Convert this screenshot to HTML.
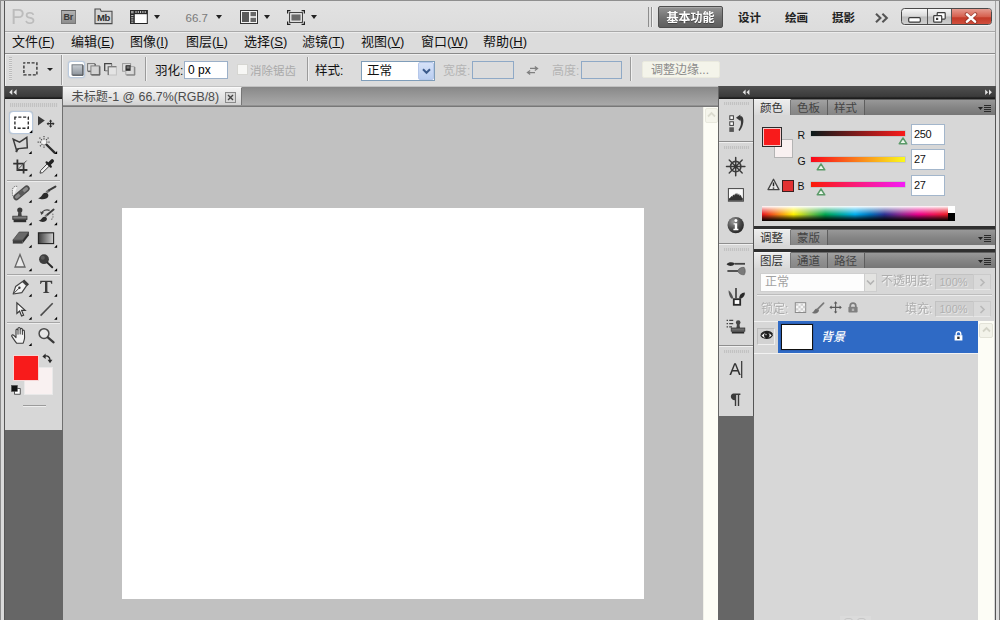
<!DOCTYPE html>
<html lang="zh-CN">
<head>
<meta charset="utf-8">
<title>Adobe Photoshop CS5</title>
<style>
html,body{margin:0;padding:0}
body{width:1000px;height:620px;overflow:hidden;position:relative;background:#dcdcdc;font-family:"Liberation Sans",sans-serif;font-size:12px;color:#000;line-height:1}
div,span,i,b{box-sizing:border-box}
.a{position:absolute}
svg{display:inline-block;overflow:visible}
svg.ic{position:absolute}
u{text-decoration:underline;text-underline-offset:1px}
.cj{font-family:"Liberation Sans","Noto Sans CJK SC",sans-serif;white-space:nowrap}
/* top application bar */
#appbar{left:0;top:0;width:1000px;height:32px;background:linear-gradient(#e2e2e2,#dcdcdc);border-top:1px solid #8f8f8f}
#appline{left:4px;top:31px;width:991px;height:2px;border-top:1px solid #a9a9a9;border-bottom:1px solid #ececec}
#menubar{left:0;top:33px;width:1000px;height:20px;background:#dcdcdc}
.mi{position:absolute;top:35px;height:14px;font-size:13px;line-height:14px;white-space:nowrap;color:#111}
#optbar{left:4px;top:53px;width:992px;height:33.5px;background:#dcdcdc;border:1px solid #8a8a8a;border-bottom-color:#7d7d7d;border-right-color:#a5a5a5;box-shadow:inset 1px 1px 0 #efefef}
.ol{position:absolute;top:64px;height:14px;font-size:12px;line-height:14px;white-space:nowrap}
.sep{position:absolute;top:57px;width:2px;height:24px;border-left:1px solid #9b9b9b;border-right:1px solid #f0f0f0}
.inp{position:absolute;background:#fff;border:1px solid #9cb0c8;font-size:12px}
.tri{position:absolute;width:0;height:0;border-left:3.5px solid transparent;border-right:3.5px solid transparent;border-top:4px solid #222}

#work{left:0;top:86px;width:1000px;height:534px;background:#666}
#lframe{left:0;top:0;width:4px;height:620px}
.hdr{background:linear-gradient(#505050,#3b3b3b 80%,#1e1e1e 92%)}
.grip{background:repeating-linear-gradient(90deg,#c2c2c2 0,#c2c2c2 1px,#d4d4d4 1px,#d4d4d4 2px)}
#tools{left:5px;top:86px;width:57.5px;height:344px;background:#d7d7d7;border-right:1px solid #6f6f6f}
.hsep{left:2px;width:53px;height:2px;border-top:1px solid #a6a6a6;border-bottom:1px solid #ededed}
#doc{left:63px;top:86px;width:655px;height:534px;background:#c1c1c1;overflow:hidden}
#tabstrip{left:0;top:.5px;width:655px;height:20px;background:linear-gradient(#878787,#8c8c8c 10%,#aaa 92%,#787878 93%)}
#doctab{left:0;top:1px;width:178.5px;height:18px;background:linear-gradient(#f2f2f2,#e2e2e2 60%,#d2d2d2);border-right:1px solid #777;border-top:1px solid #fafafa}
#paper{left:58.75px;top:121.75px;width:521.75px;height:391.5px;background:#fff}
#vscroll{left:640px;top:21px;width:15px;height:513px;background:#fdfdf6;border-left:1px solid #f0f0e8}
#dock{left:719px;top:86px;width:35px;height:330px;background:#d7d7d7;border-right:1px solid #555}
.dsep{left:0;width:34px;height:2px;border-top:1px solid #8e8e8e;border-bottom:1px solid #f0f0f0}
#panels{left:754px;top:86px;width:242px;height:534px;background:#666}
.tabbar{left:0;width:241px;height:16px;background:linear-gradient(#989898,#858585 50%,#767676);border-top:1px solid #5f5f5f}
.tab{height:16px;padding:2px 0 0 6px;border-right:1px solid #5e5e5e;background:linear-gradient(#a2a2a2,#909090 50%,#858585);border-top:1px solid #6a6a6a;white-space:nowrap}
.tab.on{background:linear-gradient(#ececec,#d8d8d8);border-top-color:#f4f4f4;border-right-color:#777;height:17px}
.pbody{left:0;width:241px;background:#d7d7d7}
.pline{left:0;width:241px;height:3px;background:#2f2f2f}

.cl{font-size:10.5px;line-height:14px;color:#111}
.sl{left:57px;width:94px;height:5px;box-shadow:0 0 0 .5px rgba(80,80,80,.25)}
.ci{left:156.5px;width:34px;height:21px;background:#fff;border:1px solid #a3b6cb;font-size:11px;letter-spacing:-.4px;line-height:18px;padding-left:2.5px;color:#111}
#spec{left:8px;top:119.5px;width:185.5px;height:15px;background:linear-gradient(rgba(255,255,255,1),rgba(255,255,255,.55) 22%,rgba(255,255,255,0) 55%,rgba(0,0,0,0) 56%,rgba(0,0,0,.6) 80%,rgba(0,0,0,1)),linear-gradient(90deg,#e8141c,#f47a1a 8%,#fff200 17%,#8cc63f 25%,#00a651 34%,#00a99d 42%,#00aeef 50%,#0072bc 58%,#2e3192 66%,#92278f 75%,#ec008c 84%,#ed145b 92%,#ed1c24)}
.di{left:181px;width:38px;height:16px;background:#d0d0d0;border:1px solid #c2c2c2;border-bottom-color:#e6e6e6;border-right:0;font-size:11px;line-height:14px;padding-left:3.5px;color:#b0b0b0;text-shadow:1px 1px 0 #e6e6e6}
.db{left:219px;width:18px;height:16px;background:#d9d9d9;border:1px solid #cacaca;border-bottom-color:#e6e6e6;padding:2.5px 0 0 5px}
.db svg{display:block}
</style>
</head>
<body>
<!-- ===== application bar ===== -->
<div class="a" id="appbar"></div>
<div class="a" id="appline"></div>
<div class="a" style="left:11px;top:6px;font-size:22px;line-height:22px;color:#bcbcbc;transform:scaleX(.94);transform-origin:0 0">Ps</div>

<!-- application bar icons -->
<div class="a" style="left:60.5px;top:10px;width:15.5px;height:14px;background:linear-gradient(#b2b2b2,#8c8c8c);border:1px solid #777;border-top-color:#5e5e5e;font-size:9px;font-weight:bold;line-height:12px;text-align:center;color:#3a3a3a;letter-spacing:-.3px">Br</div>
<svg class="ic" style="left:94px;top:8px" width="19" height="17" viewBox="0 0 19 17"><path d="M1 15.6V1h5.2l1 2.2H18v12.4Z" fill="#d4d4d4" stroke="#4a4a4a" stroke-width="1.1"/></svg>
<div class="a" style="left:95.5px;top:12px;width:16px;font-size:9.5px;font-weight:bold;line-height:11px;text-align:center;color:#2e2e2e;letter-spacing:-.4px">Mb</div>
<svg class="ic" style="left:130px;top:10px" width="18" height="14" viewBox="0 0 18 14"><rect x=".5" y=".5" width="16.8" height="13" fill="#fff" stroke="#222"/><rect x="0" y="0" width="17.5" height="4.2" fill="#2a2a2a"/><rect x="0" y="0" width="4.8" height="14" fill="#2a2a2a"/><path d="M6 1v2M8.3 1v2M10.6 1v2M12.9 1v2M15.2 1v2M1.2 5.6h2.2M1.2 7.8h2.2M1.2 10h2.2M1.2 12.2h2.2" stroke="#cfcfcf" stroke-width="1"/><rect x="1" y="1" width="2.6" height="2.4" fill="#9a9a9a"/></svg>
<i class="tri" style="left:153.5px;top:15px"></i>
<span class="a" style="left:185.5px;top:12px;font-size:11.5px;line-height:12px;color:#7a7a7a">66.7</span>
<i class="tri" style="left:215.5px;top:15px"></i>
<svg class="ic" style="left:240px;top:10px" width="18" height="14" viewBox="0 0 18 14"><rect x=".5" y=".5" width="17" height="13" fill="#f4f4f4" stroke="#333"/><rect x="2" y="2" width="7" height="10" fill="#5a5a5a"/><rect x="10.5" y="2" width="5.5" height="4.2" fill="#686868"/><rect x="10.5" y="7.8" width="5.5" height="4.2" fill="#686868"/></svg>
<i class="tri" style="left:264px;top:15px"></i>
<svg class="ic" style="left:287px;top:9.5px" width="18" height="15" viewBox="0 0 18 15"><path d="M.6 3.4V.6h2.8M14.6.6h2.8v2.8M17.4 11.6v2.8h-2.8M3.4 14.4H.6v-2.8" fill="none" stroke="#222" stroke-width="1.2"/><rect x="2.6" y="2.6" width="12.8" height="9.8" fill="#f2f2f2" stroke="#333" stroke-width="1"/><rect x="4.4" y="4.4" width="9.2" height="6.2" fill="#6a6a6a"/></svg>
<i class="tri" style="left:311px;top:15px"></i>
<!-- workspace switcher -->
<i class="a" style="left:647.5px;top:7px;width:4px;height:20px;border-left:1.5px solid #8d8d8d;border-right:1.5px solid #8d8d8d;box-shadow:1px 0 0 #f0f0f0"></i>
<div class="a" style="left:658px;top:6px;width:65px;height:22px;background:linear-gradient(#939393,#707070 55%,#5e5e5e);border:1px solid #4e4e4e;border-radius:2px;box-shadow:inset 0 1px 0 #a8a8a8"></div>
<span class="a" style="left:666.5px;top:11.5px;filter:drop-shadow(0 1px 0 #444)"><span class="cj" style="font-size:12px;font-weight:bold;color:#fff">基本功能</span></span>
<span class="a" style="left:738px;top:11.5px"><span class="cj" style="font-size:11.5px;font-weight:bold;color:#222">设计</span></span>
<span class="a" style="left:785px;top:11.5px"><span class="cj" style="font-size:11.5px;font-weight:bold;color:#222">绘画</span></span>
<span class="a" style="left:832px;top:11.5px"><span class="cj" style="font-size:11.5px;font-weight:bold;color:#222">摄影</span></span>
<svg class="ic" style="left:875px;top:12.5px" width="14" height="10" viewBox="0 0 14 10"><path d="M1 .8 5.4 5 1 9.2M7.4.8 11.8 5 7.4 9.2" fill="none" stroke="#555" stroke-width="2.1"/></svg>
<!-- window controls -->
<div class="a" style="left:901px;top:8px;width:91px;height:17px;border:1px solid #4a4a4a;border-radius:3.5px;overflow:hidden;background:linear-gradient(#f6f6f6,#d9d9d9 48%,#bdbdbd 52%,#cfcfcf);box-shadow:0 1px 0 #f2f2f2">
  <i class="a" style="left:24.5px;top:0;width:1px;height:17px;background:#555"></i>
  <i class="a" style="left:48.5px;top:0;width:1px;height:17px;background:#555"></i>
  <i class="a" style="left:49.5px;top:0;width:41px;height:17px;background:linear-gradient(#e59a8e,#d6604f 45%,#c33a28 52%,#cf4c3a 85%,#dd7766)"></i>
  <svg class="ic" style="left:6px;top:7.5px" width="13" height="6" viewBox="0 0 13 6"><rect x=".7" y=".7" width="11.6" height="4.4" rx="1" fill="#fff" stroke="#3c3c3c" stroke-width="1.2"/></svg>
  <svg class="ic" style="left:30.5px;top:3px" width="13" height="11" viewBox="0 0 13 11"><rect x="4.2" y=".7" width="8" height="6.4" rx=".8" fill="#fff" stroke="#3c3c3c" stroke-width="1.2"/><rect x=".7" y="3.6" width="8" height="6.6" rx=".8" fill="#fff" stroke="#3c3c3c" stroke-width="1.2"/><rect x="3" y="5.8" width="2.2" height="2.2" fill="#3c3c3c"/></svg>
  <svg class="ic" style="left:63px;top:3.5px" width="12" height="10" viewBox="0 0 12 10"><path d="M1.6 1.2 10.4 8.8M10.4 1.2 1.6 8.8" stroke="#7a2a20" stroke-width="4" stroke-linecap="round" opacity=".55"/><path d="M2 1.4 10 8.6M10 1.4 2 8.6" stroke="#fff" stroke-width="2.6" stroke-linecap="round"/></svg>
</div>

<!-- ===== menu bar ===== -->
<div class="a" id="menubar"></div>
<span class="mi" style="left:12px"><span class="cj" style="font-size:13px;color:#111">文件</span>(<u>F</u>)</span>
<span class="mi" style="left:71px"><span class="cj" style="font-size:13px;color:#111">编辑</span>(<u>E</u>)</span>
<span class="mi" style="left:130px"><span class="cj" style="font-size:13px;color:#111">图像</span>(<u>I</u>)</span>
<span class="mi" style="left:186px"><span class="cj" style="font-size:13px;color:#111">图层</span>(<u>L</u>)</span>
<span class="mi" style="left:244px"><span class="cj" style="font-size:13px;color:#111">选择</span>(<u>S</u>)</span>
<span class="mi" style="left:302px"><span class="cj" style="font-size:13px;color:#111">滤镜</span>(<u>T</u>)</span>
<span class="mi" style="left:361px"><span class="cj" style="font-size:13px;color:#111">视图</span>(<u>V</u>)</span>
<span class="mi" style="left:421px"><span class="cj" style="font-size:13px;color:#111">窗口</span>(<u>W</u>)</span>
<span class="mi" style="left:483px"><span class="cj" style="font-size:13px;color:#111">帮助</span>(<u>H</u>)</span>

<!-- ===== options bar ===== -->
<div class="a" id="optbar"></div>
<i class="sep" style="left:61px;top:55px;height:30px"></i>
<i class="sep" style="left:145px"></i>
<i class="sep" style="left:307px"></i>
<i class="sep" style="left:630px"></i>
<span class="ol" style="left:155px"><span class="cj" style="font-size:12.5px;color:#111">羽化</span>:</span>
<div class="inp" style="left:184px;top:61px;width:44px;height:18px;line-height:16px;padding-left:3px">0 px</div>
<span class="ol" style="left:250px"><span class="cj" style="font-size:11.5px;color:#aaa">消除锯齿</span></span>
<span class="ol" style="left:315px"><span class="cj" style="font-size:12.5px;color:#111">样式</span>:</span>
<div class="inp" style="left:361px;top:61px;width:74px;height:20px;border-color:#7f9db9"></div>
<span class="ol" style="left:367px;top:64px"><span class="cj" style="font-size:12.5px;color:#111">正常</span></span>
<span class="ol" style="left:443px"><span class="cj" style="font-size:12px;color:#b4b4b4">宽度</span><span style="color:#b4b4b4">:</span></span>
<div class="inp" style="left:472px;top:61px;width:42px;height:18px;background:#dcdcdc;border-color:#8fa9c6"></div>
<span class="ol" style="left:552px"><span class="cj" style="font-size:12px;color:#b4b4b4">高度</span><span style="color:#b4b4b4">:</span></span>
<div class="inp" style="left:581px;top:61px;width:41px;height:18px;background:#dcdcdc;border-color:#8fa9c6"></div>
<div class="a" style="left:642px;top:61px;width:78px;height:17px;background:#f4f4ea;border:1px solid #eaeade;border-radius:2px"></div>
<span class="ol" style="left:651px;top:63px;color:#8c8c8c"><span class="cj" style="font-size:12px;color:#8c8c8c">调整边缘</span>...</span>

<!-- options bar icons -->
<i class="a" style="left:8.5px;top:57px;width:3px;height:24px;background:repeating-linear-gradient(#bdbdbd 0,#bdbdbd 1px,#e4e4e4 1px,#e4e4e4 2px)"></i>
<svg class="ic" style="left:23px;top:62px" width="15" height="14" viewBox="0 0 15 14"><rect x=".9" y=".9" width="13" height="12" fill="none" stroke="#333" stroke-width="1.4" stroke-dasharray="3 1.6" stroke-dashoffset="1.5"/></svg>
<i class="tri" style="left:46.5px;top:68px;border-left-width:3px;border-right-width:3px;border-top-width:3.5px"></i>
<div class="a" style="left:67.5px;top:61px;width:17px;height:17px;background:#fff;border:1px solid #b9c9dc;border-radius:3px;box-shadow:0 0 1.5px #a9bcd2"></div>
<svg class="ic" style="left:71px;top:64px" width="13" height="12" viewBox="0 0 13 12"><defs><linearGradient id="gq" x1="0" y1="0" x2="0" y2="1"><stop offset="0" stop-color="#c9ced4"/><stop offset="1" stop-color="#8e959d"/></linearGradient></defs><rect x="1" y=".8" width="10.6" height="10" fill="url(#gq)" stroke="#6d737a" stroke-width=".9"/><path d="M1.4 11.3h10.7V1.2" fill="none" stroke="#4a4f55" stroke-width="1"/></svg>
<svg class="ic" style="left:87px;top:63px" width="14" height="13" viewBox="0 0 14 13"><rect x=".6" y=".6" width="7.2" height="7.4" fill="#dedede" stroke="#777" stroke-width="1"/><path d="M1 8.6h7.4V1" fill="none" stroke="#555" stroke-width=".9"/><rect x="3.9" y="2.9" width="8.4" height="8.6" fill="#d4d4d4" stroke="#808080" stroke-width="1"/><path d="M4.4 12.1h8.5V3.3" fill="none" stroke="#555" stroke-width="1"/></svg>
<svg class="ic" style="left:104px;top:62.5px" width="14" height="13" viewBox="0 0 14 13"><path d="M.7 8V.7h7.2" fill="none" stroke="#444" stroke-width="1.3"/><path d="M.9 7.8h3M7.7.9v2.4" stroke="#777" stroke-width="1"/><rect x="4.2" y="3.8" width="8.2" height="8.2" fill="#e4e4e4" stroke="#c2c2c2" stroke-width="1"/><path d="M4.2 12V3.8h8.2" fill="none" stroke="#666" stroke-width="1.1"/></svg>
<svg class="ic" style="left:122px;top:63px" width="14" height="13" viewBox="0 0 14 13"><rect x=".6" y=".6" width="8" height="7.6" fill="#e0e0e0" stroke="#999" stroke-width="1"/><rect x="3.8" y="3.6" width="8.4" height="8" fill="#dadada" stroke="#aaa" stroke-width="1"/><path d="M4.4 12.1h8.4V4" fill="none" stroke="#777" stroke-width="1"/><rect x="3.6" y="2.2" width="5" height="5.6" fill="#2b2b2b"/><rect x="4.6" y="3.2" width="3" height="2.4" fill="#777"/></svg>
<div class="a" style="left:237px;top:64px;width:11px;height:11px;background:#f7f7f5;border:1px solid #d6d6d2"></div>
<div class="a" style="left:418px;top:62px;width:16px;height:18px;background:linear-gradient(#d6e2f8,#b9cdf0);border:1px solid #b5c7ea;border-radius:2px"></div>
<svg class="ic" style="left:421.5px;top:68px" width="9" height="7" viewBox="0 0 9 7"><path d="M1 1.2 4.5 4.8 8 1.2" fill="none" stroke="#3b5a8c" stroke-width="2"/></svg>
<svg class="ic" style="left:527px;top:65.5px" width="11" height="9" viewBox="0 0 11 9"><path d="M3 2.4h7.4M7.8.4l2.8 2-2.8 2" fill="none" stroke="#808080" stroke-width="1.2"/><path d="M8 6.6H.6M3.2 4.6.4 6.6l2.8 2" fill="none" stroke="#808080" stroke-width="1.2"/></svg>

<!-- ===== work area ===== -->
<div class="a" id="work"></div>

<!-- tools panel -->
<div class="a" id="tools">
  <div class="a hdr" style="left:0;top:0;width:57px;height:12.5px"></div>
  <div class="a grip" style="left:5px;top:17px;width:48px;height:4px"></div>
  <i class="a hsep" style="top:94px"></i>
  <i class="a hsep" style="top:188px"></i>
  <i class="a hsep" style="top:236px"></i>
  <div class="a" style="left:4px;top:25px;width:24px;height:23px;background:#fff;border:1px solid #b8c8dc;border-radius:4px;box-shadow:0 0 1px #9ab"></div>
  <!-- colour swatches -->
  <div class="a" style="left:19px;top:281px;width:29px;height:28px;background:#f9f1f1;border:1px solid #e9e9e9"></div>
  <div class="a" style="left:8px;top:269px;width:26px;height:26px;background:#f81b1b;border:1px solid #f7d6d6"></div>
  <div class="a" style="left:18px;top:319px;width:23px;height:2px;background:#9b9b9b;border-bottom:1px solid #eee"></div>
</div>

<!-- document window -->
<div class="a" id="doc">
  <div class="a" id="tabstrip"></div>
  <div class="a" id="doctab"><span style="position:absolute;left:8.5px;top:1.5px;white-space:nowrap;font-size:12.4px;line-height:14px;color:#4c4c4c"><span class="cj" style="font-size:12.2px;color:#4c4c4c">未标题</span>-1 @ 66.7%(RGB/8)</span></div>
  <div class="a" id="paper"></div>
  <div class="a" id="vscroll"></div>
</div>

<!-- icon dock -->
<div class="a" id="dock">
  <div class="a hdr" style="left:0;top:0;width:35px;height:12.5px"></div>
  <div class="a grip" style="left:5px;top:16px;width:25px;height:3px"></div>
  <i class="a dsep" style="top:55px"></i>
  <div class="a grip" style="left:5px;top:60px;width:25px;height:3px"></div>
  <i class="a dsep" style="top:157px"></i>
  <div class="a grip" style="left:5px;top:162px;width:25px;height:3px"></div>
  <i class="a dsep" style="top:259px"></i>
  <div class="a grip" style="left:5px;top:264px;width:25px;height:3px"></div>
</div>

<!-- right panels -->
<div class="a" id="panels">
  <div class="a hdr" style="left:0;top:0;width:242px;height:12.5px"></div>
  <!-- colour panel -->
  <div class="a tabbar" style="top:13px"></div>
  <div class="a tab on" style="left:0;top:13px;width:37px"><span class="cj" style="font-size:11.5px;color:#333">颜色</span></div>
  <div class="a tab" style="left:37px;top:13px;width:37px"><span class="cj" style="font-size:11.5px;color:#444">色板</span></div>
  <div class="a tab" style="left:74px;top:13px;width:37px"><span class="cj" style="font-size:11.5px;color:#444">样式</span></div>
  <div class="a pbody" style="top:29px;height:111px"></div>
  <!-- adjustments panel (collapsed) -->
  <div class="a pline" style="top:140px"></div>
  <div class="a tabbar" style="top:143px"></div>
  <div class="a tab on" style="left:0;top:143px;width:37px"><span class="cj" style="font-size:11.5px;color:#333">调整</span></div>
  <div class="a tab" style="left:37px;top:143px;width:37px"><span class="cj" style="font-size:11.5px;color:#444">蒙版</span></div>
  <div class="a pbody" style="top:159px;height:4px"></div>
  <!-- layers panel -->
  <div class="a pline" style="top:163px"></div>
  <div class="a tabbar" style="top:166px"></div>
  <div class="a tab on" style="left:0;top:166px;width:37px"><span class="cj" style="font-size:11.5px;color:#333">图层</span></div>
  <div class="a tab" style="left:37px;top:166px;width:37px"><span class="cj" style="font-size:11.5px;color:#444">通道</span></div>
  <div class="a tab" style="left:74px;top:166px;width:37px"><span class="cj" style="font-size:11.5px;color:#444">路径</span></div>
  <div class="a pbody" style="top:182px;height:360px"></div>
  <!-- colour panel contents -->
  <div class="a" style="left:20px;top:53px;width:19px;height:19px;background:#f9f1f1;border:1px solid #b4b4b4"></div>
  <div class="a" style="left:8px;top:41px;width:20px;height:20px;background:#f81b1b;border:1px solid #2b2b2b;box-shadow:inset 0 0 0 1px #f6c9c9"></div>
  <span class="a cl" style="left:43.5px;top:42px">R</span>
  <span class="a cl" style="left:43.5px;top:67.5px">G</span>
  <span class="a cl" style="left:43.5px;top:93px">B</span>
  <div class="a sl" style="top:45px;background:linear-gradient(90deg,#0a1a1a,#fa1b1b)"></div>
  <div class="a sl" style="top:71px;background:linear-gradient(90deg,#fa051b,#fa801b 50%,#fafa1b)"></div>
  <div class="a sl" style="top:96px;background:linear-gradient(90deg,#fa1b05,#fa1b80 50%,#f41bf8)"></div>
  <svg class="ic" style="left:144px;top:50.5px" width="10" height="8" viewBox="0 0 10 8"><path d="M5 1 8.8 6.8H1.2Z" fill="#eef8ee" stroke="#5a9a68" stroke-width="1.5" stroke-linejoin="round"/></svg>
  <svg class="ic" style="left:62px;top:77px" width="10" height="8" viewBox="0 0 10 8"><path d="M5 1 8.8 6.8H1.2Z" fill="#eef8ee" stroke="#5a9a68" stroke-width="1.5" stroke-linejoin="round"/></svg>
  <svg class="ic" style="left:62px;top:102px" width="10" height="8" viewBox="0 0 10 8"><path d="M5 1 8.8 6.8H1.2Z" fill="#eef8ee" stroke="#5a9a68" stroke-width="1.5" stroke-linejoin="round"/></svg>
  <div class="a ci" style="top:37.5px">250</div>
  <div class="a ci" style="top:63px">27</div>
  <div class="a ci" style="top:88.5px">27</div>
  <svg class="ic" style="left:13px;top:92px" width="13" height="13" viewBox="0 0 13 13"><path d="M6.5 1.2 12 11.6H1Z" fill="#e9e9e9" stroke="#444" stroke-width="1.3" stroke-linejoin="round"/><path d="M6.5 4.6v3.6M6.5 9.4v1.3" stroke="#222" stroke-width="1.5"/></svg>
  <div class="a" style="left:28px;top:93.5px;width:12px;height:12px;background:#e23232;border:1px solid #3a2020"></div>
  <div class="a" id="spec"></div>
  <div class="a" style="left:193.5px;top:119.5px;width:7px;height:7.5px;background:#fff"></div>
  <div class="a" style="left:193.5px;top:127px;width:7px;height:7.5px;background:#000"></div>
  <!-- panel menus -->
  <svg class="ic pm" style="left:224px;top:18px" width="14" height="9" viewBox="0 0 14 9"><path d="M0 3h5L2.5 6Z" fill="#222"/><path d="M6 1.5h7M6 3.5h7M6 5.5h7M6 7.5h7" stroke="#2a2a2a" stroke-width="1"/></svg>
  <svg class="ic pm" style="left:224px;top:148px" width="14" height="9" viewBox="0 0 14 9"><path d="M0 3h5L2.5 6Z" fill="#222"/><path d="M6 1.5h7M6 3.5h7M6 5.5h7M6 7.5h7" stroke="#2a2a2a" stroke-width="1"/></svg>
  <svg class="ic pm" style="left:224px;top:171px" width="14" height="9" viewBox="0 0 14 9"><path d="M0 3h5L2.5 6Z" fill="#222"/><path d="M6 1.5h7M6 3.5h7M6 5.5h7M6 7.5h7" stroke="#2a2a2a" stroke-width="1"/></svg>
  <!-- layers panel contents -->
  <div class="a" style="left:6px;top:187px;width:116px;height:19px;background:#fdfdfd;border:1px solid #cfcfcf;border-right:0"></div>
  <div class="a" style="left:110px;top:187px;width:13px;height:19px;background:#e3e3e1;border:1px solid #cdcdcd"></div>
  <svg class="ic" style="left:112px;top:193px" width="9" height="7" viewBox="0 0 9 7"><path d="M1 1.5 4.5 5 8 1.5" fill="none" stroke="#b3b3b3" stroke-width="1.6"/></svg>
  <span class="a" style="left:11px;top:190px"><span class="cj" style="font-size:12px;color:#a2a2a2">正常</span></span>
  <span class="a" style="left:127px;top:189px;white-space:nowrap;color:#b0b0b0;filter:drop-shadow(1px 1px 0 #f3f3f3)"><span class="cj" style="font-size:12px;color:#aeaeae">不透明度</span>:</span>
  <div class="a di" style="top:188px">100%</div>
  <div class="a db" style="top:188px"><svg width="7" height="9" viewBox="0 0 7 9"><path d="M1.5 1 5 4.5 1.5 8" fill="none" stroke="#b9b9b9" stroke-width="1.7"/></svg></div>
  <i class="a" style="left:3px;top:208px;width:235px;height:2px;border-top:1px solid #bdbdbd;border-bottom:1px solid #ececec"></i>
  <span class="a" style="left:7px;top:217px;white-space:nowrap;color:#b0b0b0;filter:drop-shadow(1px 1px 0 #f3f3f3)"><span class="cj" style="font-size:12px;color:#aeaeae">锁定</span>:</span>
  <span class="a" style="left:151px;top:217px;white-space:nowrap;color:#b0b0b0;filter:drop-shadow(1px 1px 0 #f3f3f3)"><span class="cj" style="font-size:12px;color:#aeaeae">填充</span>:</span>
  <div class="a di" style="top:215px">100%</div>
  <div class="a db" style="top:215px"><svg width="7" height="9" viewBox="0 0 7 9"><path d="M1.5 1 5 4.5 1.5 8" fill="none" stroke="#b9b9b9" stroke-width="1.7"/></svg></div>
  <!-- layer row -->
  <div class="a" style="left:0;top:235px;width:224px;height:33px;background:#d7d7d7;border-top:1px solid #f0f0f0;border-bottom:1px solid #f2f2f2"></div>
  <div class="a" style="left:23.5px;top:235px;width:200.5px;height:32px;background:#2f6ac5"></div>
  <div class="a" style="left:3px;top:242px;width:18px;height:17px;border:1px solid #bcbcbc;border-right-color:#eee;border-bottom-color:#eee;background:#d2d2d2"></div>
  <div class="a" style="left:27px;top:238px;width:32px;height:26px;background:#fff;border:1px solid #111;box-shadow:0 0 0 1px #2b5fb4"></div>
  <span class="a" style="left:67px;top:245px"><span class="cj" style="font-size:12px;font-style:italic;font-weight:500;color:#fff">背景</span></span>
  <svg class="ic" style="left:200px;top:245px" width="9" height="10" viewBox="0 0 9 10"><path d="M2.2 4.5V3a2.3 2.3 0 0 1 4.6 0v1.5" fill="none" stroke="#fff" stroke-width="1.3"/><rect x=".6" y="4.2" width="7.8" height="5.3" fill="#fff"/><rect x="3.2" y="5.6" width="2.4" height="2.4" fill="#2b2b2b"/></svg>
  <div class="a" style="left:86px;top:530px;width:31px;height:5px;background:#dbdbdb"></div><div class="a" style="left:90px;top:532px;width:9px;height:6px;border:1.5px solid #c6c6c6;border-radius:5px"></div><div class="a" style="left:103px;top:532px;width:9px;height:6px;border:1.5px solid #c6c6c6;border-radius:5px"></div>
  <!-- layers scrollbar -->
  <div class="a" style="left:224px;top:235px;width:16px;height:300px;background:#fdfdf6"></div>
  <div class="a" style="left:225px;top:236.5px;width:14px;height:15px;background:#f3f3ea;border:1px solid #e3e3d8;border-radius:2px"></div>
  <svg class="ic" style="left:228px;top:240px" width="9" height="7" viewBox="0 0 9 7"><path d="M1 5.5 4.5 2 8 5.5" fill="none" stroke="#d4d4c8" stroke-width="1.8"/></svg>
</div>

<!-- tool icons (page coordinates) -->
<svg class="ic" style="left:0;top:86px" width="64" height="346" viewBox="0 86 64 346">
<defs>
<linearGradient id="gg" x1="0" y1="0" x2="1" y2="0"><stop offset="0" stop-color="#3c3c3c"/><stop offset="1" stop-color="#d2d2d2"/></linearGradient>
<linearGradient id="ge" x1="0" y1="0" x2="0" y2="1"><stop offset="0" stop-color="#9a9a9a"/><stop offset="1" stop-color="#4e4e4e"/></linearGradient>
</defs>
<!-- header chevrons -->
<path d="M12.3 89.3 9.2 92.2 12.3 95.1ZM16.6 89.3 13.5 92.2 16.6 95.1Z" fill="#e4e4e4"/>
<!-- corner triangles -->
<path transform="translate(29.6 130.4)" d="M2.7 -.3V2.7H-.3Z"/>
<path transform="translate(29 151.4)" d="M2.7 -.3V2.7H-.3Z"/><path transform="translate(54.4 151.4)" d="M2.7 -.3V2.7H-.3Z"/>
<path transform="translate(29 173.8)" d="M2.7 -.3V2.7H-.3Z"/><path transform="translate(54.4 173.8)" d="M2.7 -.3V2.7H-.3Z"/>
<path transform="translate(29 200)" d="M2.7 -.3V2.7H-.3Z"/><path transform="translate(54.4 200)" d="M2.7 -.3V2.7H-.3Z"/>
<path transform="translate(29 222.5)" d="M2.7 -.3V2.7H-.3Z"/><path transform="translate(54.4 222.5)" d="M2.7 -.3V2.7H-.3Z"/>
<path transform="translate(29 245)" d="M2.7 -.3V2.7H-.3Z"/><path transform="translate(54.4 245)" d="M2.7 -.3V2.7H-.3Z"/>
<path transform="translate(29 268.5)" d="M2.7 -.3V2.7H-.3Z"/><path transform="translate(54.4 268.5)" d="M2.7 -.3V2.7H-.3Z"/>
<path transform="translate(29 294)" d="M2.7 -.3V2.7H-.3Z"/><path transform="translate(54.4 294)" d="M2.7 -.3V2.7H-.3Z"/>
<path transform="translate(29 317)" d="M2.7 -.3V2.7H-.3Z"/><path transform="translate(54.4 317)" d="M2.7 -.3V2.7H-.3Z"/>
<path transform="translate(29 343.4)" d="M2.7 -.3V2.7H-.3Z"/>
<!-- 1 marquee -->
<rect x="14.9" y="117.1" width="13.4" height="11.2" fill="none" stroke="#2e2e2e" stroke-width="1.4" stroke-dasharray="3.1 1.7" stroke-dashoffset="1.4"/>
<!-- 2 move -->
<path d="M38 115.9V125.6L44.8 120.6Z" fill="#3a3a3a"/>
<path d="M50.6 119.6 48.9 121.6H52.3ZM50.6 127.8 48.9 125.8H52.3ZM46.6 123.7 48.5 122V125.4ZM54.6 123.7 52.7 122V125.4Z" fill="#2e2e2e"/>
<path d="M50.6 121V126.4M47.8 123.7H53.4" stroke="#2e2e2e" stroke-width="1.2"/>
<!-- 3 polygonal lasso -->
<path d="M13.2 139.2 19.6 142.2 26.8 137.4 27.3 147.8 18.6 148.6 16.6 150.4Z" fill="none" stroke="#3c3c3c" stroke-width="1.5" stroke-linejoin="miter"/>
<path d="M17.6 148.4 16.2 152.2" stroke="#3c3c3c" stroke-width="2"/>
<!-- 4 magic wand -->
<g stroke="#4a4a4a" stroke-width="1.2" stroke-dasharray="1.2 1">
<path d="M44 136V140M44 144.4V148.6M37.6 142.2H41.8M46.2 142.2H50.4M39.5 137.7 42.4 140.6M45.6 143.8 48.5 146.7M48.5 137.7 45.6 140.6M42.4 143.8 39.5 146.7"/></g>
<circle cx="44" cy="142.2" r="2.1" fill="#f4f4f4"/>
<path d="M46.6 144.8 54.6 152.6" stroke="#2c2c2c" stroke-width="2.3" stroke-linecap="round"/>
<!-- 5 crop -->
<path d="M17.4 159.6V170H27.4M13.2 163.6H23.6V173.4" fill="none" stroke="#333" stroke-width="1.8"/>
<path d="M17.6 169.8 26.6 160.6" stroke="#555" stroke-width="1"/>
<!-- 6 eyedropper -->
<path d="M40 173.2 40.6 170.6 47.6 163.4 49.8 165.6 42.6 172.6Z" fill="#f2f2f2" stroke="#444" stroke-width="1"/>
<path d="M46.6 162.4 50.8 166.6" stroke="#222" stroke-width="2.2" stroke-linecap="round"/>
<path d="M49.4 163.8 52.2 161" stroke="#222" stroke-width="3.6" stroke-linecap="round"/>
<!-- 7 spot healing -->
<path d="M17.2 186.4C14.4 185.6 12.2 187.8 12.4 190.6 12.5 193.2 12 195.4 13.6 196.8" fill="#f1f1f1" stroke="#666" stroke-width=".9" stroke-dasharray="1.4 .9"/>
<path d="M16.4 197.2 26.6 188.6" stroke="#4c4c4c" stroke-width="6.2" stroke-linecap="round"/>
<path d="M16.6 197 26.4 188.8" stroke="#8a8a8a" stroke-width="3.4" stroke-linecap="round"/>
<path d="M19.6 194.6 23.4 191.4" stroke="#5a5a5a" stroke-width="4.4"/>
<!-- 8 brush -->
<path d="M38.2 198.2C40.8 197.8 41.6 195.6 43 193.8 44.6 192.2 47 192.6 48 194 49 195.6 48.2 197.6 46.2 198.6 43.6 199.8 40.4 199.4 38.2 198.2Z" fill="#2c2c2c"/>
<path d="M46.4 192.4 49.6 190" stroke="#777" stroke-width="2.6"/>
<path d="M49.2 190.2 55.4 186.6" stroke="#3c3c3c" stroke-width="2.1" stroke-linecap="round"/>
<!-- 9 stamp -->
<circle cx="19.8" cy="210" r="2.6" fill="#3a3a3a"/>
<path d="M18.4 211.6H21.2L21.8 216.2H17.8Z" fill="#444"/>
<rect x="12.8" y="216.2" width="14.2" height="3.4" fill="url(#ge)" stroke="#333" stroke-width=".8"/>
<rect x="13.6" y="220" width="12.6" height="2.2" fill="#2e2e2e"/>
<!-- 10 history brush -->
<path d="M38.6 220.6C40.6 220.4 41.4 218.8 42.6 217.4 44 216.2 45.8 216.6 46.6 217.8 47.4 219.2 46.6 220.8 45 221.6 42.8 222.4 40.2 221.8 38.6 220.6Z" fill="#2c2c2c"/>
<path d="M45.2 216.4 48 214.2" stroke="#777" stroke-width="2.3"/>
<path d="M47.6 214.4 53.6 209.6" stroke="#3c3c3c" stroke-width="1.9" stroke-linecap="round"/>
<path d="M41.6 213.4C42.6 210.4 46.4 209 49.6 210.4" fill="none" stroke="#444" stroke-width="1.3"/>
<path d="M40 211.6 41.4 215 44 212.6Z" fill="#444"/>
<path d="M52.6 213.6C53.6 216.2 52.8 218.6 51 220" fill="none" stroke="#777" stroke-width="1.1" stroke-dasharray="1.5 1"/>
<!-- 11 eraser -->
<path d="M12.8 240.2 19.2 232 28.8 232 22.6 240.2Z" fill="#6a6a6a" stroke="#444" stroke-width=".7"/>
<path d="M12.8 240.2H22.6V243.6H12.8Z" fill="#3e3e3e"/>
<path d="M22.6 240.2 28.8 232V235.6L22.6 243.6Z" fill="#2e2e2e"/>
<!-- 12 gradient -->
<rect x="38.4" y="232.8" width="15.2" height="10.8" fill="url(#gg)" stroke="#222" stroke-width="1.1"/>
<!-- 13 sharpen -->
<path d="M20 254.4 25 267H15Z" fill="#eaeaea" stroke="#666" stroke-width="1.3" stroke-linejoin="miter"/>
<!-- 14 dodge -->
<circle cx="44" cy="259.2" r="4.9" fill="#3e3e3e"/>
<circle cx="42.8" cy="257.8" r="2" fill="#5c5c5c"/>
<path d="M47.4 262.6 52.2 267.2" stroke="#2a2a2a" stroke-width="2" stroke-linecap="round"/>
<!-- 15 pen -->
<path d="M13.2 294 15.6 286.6 22.6 281.6 26.6 285.6 21.8 292.6Z" fill="#f3f3f3" stroke="#444" stroke-width="1.2" stroke-linejoin="round"/>
<path d="M13.6 293.6 18.8 288.4" stroke="#444" stroke-width="1"/>
<circle cx="19.4" cy="287.8" r="1.2" fill="#333"/>
<path d="M22.4 281 27.4 286 29 284.2 24.2 279.4Z" fill="#3a3a3a"/>
<!-- 16 type -->
<path d="M40.2 280.8H52.2V284H51.4C51.2 282.6 50.6 282 49.2 282H47.4V291C47.4 291.8 47.8 292.2 49.2 292.3V293H43.2V292.3C44.6 292.2 45 291.8 45 291V282H43.2C41.8 282 41.2 282.6 41 284H40.2Z" fill="#3c3c3c"/>
<!-- 17 path selection -->
<path d="M16.9 302.8V313.4L19.6 311 21.6 316 23.6 315.2 21.6 310.4H25.2Z" fill="#fafafa" stroke="#3a3a3a" stroke-width="1.2" stroke-linejoin="miter"/>
<!-- 18 line -->
<path d="M40.6 315.6 52.7 303.2" stroke="#4c4c4c" stroke-width="1.6"/>
<!-- 19 hand -->
<path d="M16.6 343.2C14.6 340.8 13.4 338.6 11.8 336.4 11.2 335.2 12.6 334.4 13.6 335.2L16 337.6V330.2C16 328.8 18 328.8 18 330.2V328.6C18 327.2 20.2 327.2 20.2 328.6V329.4C20.2 328 22.4 328 22.4 329.4V331C22.4 329.8 24.4 329.8 24.4 331.2L24.6 337.6C24.6 340 23.6 341.4 23.2 343.2Z" fill="#f2f2f2" stroke="#3c3c3c" stroke-width="1.1" stroke-linejoin="round"/>
<path d="M18 330.4V334.6M20.2 329.6V334.4M22.4 331V334.8" stroke="#3c3c3c" stroke-width="1"/>
<!-- 20 zoom -->
<circle cx="44" cy="333.6" r="4.9" fill="#e6e6e6" stroke="#4a4a4a" stroke-width="1.5"/>
<path d="M47.8 337.4 53.6 342.4" stroke="#3a3a3a" stroke-width="2.2" stroke-linecap="round"/>
<!-- swap colours -->
<path d="M44.6 356.2C47.6 355.2 50 357 50 360" fill="none" stroke="#2a2a2a" stroke-width="1.3"/>
<path d="M42.4 356.6 45.6 353.6V359Z" fill="#2a2a2a"/>
<path d="M50 363.2 47.6 359.8H52.4Z" fill="#2a2a2a"/>
<!-- default colours -->
<rect x="14.6" y="388.6" width="5.6" height="5.6" fill="#fff" stroke="#333" stroke-width=".8"/>
<rect x="11.4" y="385.4" width="6" height="6" fill="#111" stroke="#555" stroke-width=".6"/>
</svg>

<!-- window frame -->
<div class="a" style="left:0;top:1px;width:5px;height:619px;background:#dadada;border-left:1px solid #8c8c8c;border-right:1px solid #565656"></div>
<div class="a" style="left:995px;top:1px;width:5px;height:619px;background:#dedede;border-left:1px solid #565656;border-right:1px solid #777"></div>
<div class="a" style="left:995px;top:1px;width:1px;height:85px;background:#a2a2a2"></div>
<!-- dock + panel icons (page coordinates) -->
<svg class="ic" style="left:700px;top:86px" width="300" height="340" viewBox="700 86 300 340">
<defs>
<radialGradient id="gi" cx=".35" cy=".3" r=".8"><stop offset="0" stop-color="#9c9c9c"/><stop offset=".55" stop-color="#4a4a4a"/><stop offset="1" stop-color="#1e1e1e"/></radialGradient>
</defs>
<!-- header chevrons -->
<path d="M745.6 89.6 742.7 92.3 745.6 95ZM749.4 89.6 746.5 92.3 749.4 95Z" fill="#e4e4e4"/>
<path d="M985.2 89.6 988.1 92.3 985.2 95ZM989 89.6 991.9 92.3 989 95Z" fill="#e4e4e4"/>
<!-- history -->
<rect x="729.8" y="115.8" width="3.6" height="3.6" fill="#fff" stroke="#3c3c3c" stroke-width="1"/>
<rect x="729.8" y="121.8" width="3.6" height="3.6" fill="#fff" stroke="#3c3c3c" stroke-width="1"/>
<rect x="729.3" y="127.3" width="4.6" height="4.6" fill="#555"/>
<path d="M739.4 116.2H741.6C744.2 117.6 744.4 125 739.6 131L738.4 130C741.2 126 741.6 121.6 740.2 119.4H739.4Z" fill="#3a3a3a"/>
<path d="M736 117.8 740.4 114.6V121Z" fill="#3a3a3a"/>
<!-- navigator wheel -->
<g stroke="#3c3c3c" stroke-linecap="round">
<path d="M735.7 157.4V175.8M726.5 166.6H744.9" stroke-width="1.5"/>
<path d="M729.2 160.1 742.2 173.1M742.2 160.1 729.2 173.1" stroke-width="1.4"/>
</g>
<circle cx="735.7" cy="166.6" r="5.2" fill="none" stroke="#3c3c3c" stroke-width="1.6"/>
<circle cx="735.7" cy="166.6" r="2" fill="#333"/>
<!-- histogram -->
<rect x="728.4" y="188.6" width="15" height="12.6" fill="#fbfbfb" stroke="#444" stroke-width="1"/>
<path d="M729 200.8V198.6L730.4 197.4 731.4 196 732.2 196.8 733.2 194.4 734.2 195.6 735.2 193.2 736 194.8 737 192.8 738 195.2 739 193.6 739.8 196 740.8 194.8 741.6 197.2 742.8 198.2V200.8Z" fill="#333"/>
<!-- info -->
<circle cx="735.7" cy="225.1" r="8.2" fill="url(#gi)"/>
<circle cx="735.9" cy="220.6" r="1.5" fill="#fff"/>
<path d="M733.6 223.2H737.2V228.8H738.4V230.2H733.4V228.8H734.8V224.6H733.6Z" fill="#fff"/>
<!-- brush presets -->
<path d="M726.6 264.2C728.6 262 732 261.6 735 263.4 733 266.4 729.2 266.8 726.6 264.2Z" fill="#2e2e2e"/>
<path d="M734.6 263.8H745" stroke="#444" stroke-width="1.8"/>
<path d="M727.4 271H738" stroke="#444" stroke-width="1.8"/>
<path d="M737.6 271C738.6 268.4 741.4 267 744.2 267.4 745.6 269.6 745.6 272.6 744.2 274.8 741.4 275 738.6 273.6 737.6 271Z" fill="#7a7a7a" stroke="#555" stroke-width=".6"/>
<!-- tool presets -->
<rect x="733.8" y="299.2" width="6.4" height="5.6" fill="#fff" stroke="#2a2a2a" stroke-width="1.8"/>
<path d="M728.6 290.2C730.8 292 732.6 295 733.4 298.4L731.2 298.6C729.4 296.2 728.4 293 728.6 290.2Z" fill="#555"/>
<path d="M736 288V298.6" stroke="#444" stroke-width="1.7"/>
<path d="M739.2 298.4C739.2 295.4 741 292.8 744.8 292.6 745.2 295.2 743.6 297.6 741.2 298.6Z" fill="#2a2a2a"/>
<!-- clone source -->
<path d="M726.6 320.4H728M729.2 320.4H733.2M726.6 323.6H728M729.2 323.6H733.2M726.6 326.8H728M729.2 326.8H732" stroke="#444" stroke-width="1.2"/>
<circle cx="738.2" cy="322.6" r="2.3" fill="#444"/>
<path d="M737 324H739.4L740 328H736.4Z" fill="#444"/>
<rect x="731.2" y="328" width="13.6" height="3.2" fill="#6a6a6a" stroke="#333" stroke-width=".8"/>
<rect x="731.8" y="331.6" width="12.4" height="1.9" fill="#2c2c2c"/>
<!-- character / paragraph -->
<path d="M741.7 361V378" stroke="#333" stroke-width="1.2"/>
<path d="M729.4 375 734.2 363.2H735.9L740.7 375H739L737.6 371.4H732.5L731.1 375ZM733 370H737.1L735.05 364.8Z" fill="#333"/>
<path d="M730.6 393.4H740.4V394.9H739.2V406H737.8V394.9H736.2V406H734.8V400.2C730.4 400.2 729.4 394.2 733.2 393.4Z" fill="#3a3a3a"/>
<!-- lock row -->
<rect x="795.3" y="302.7" width="10.4" height="9.8" fill="#f6f6f6" stroke="#8a8a8a" stroke-width="1"/>
<path d="M796 303.4H798.4V305.8H796ZM800.6 303.4H803V305.8H800.6ZM798.4 305.8H800.6V308.2H798.4ZM803 305.8H805.2V308.2H803ZM796 308.2H798.4V310.4H796ZM800.6 308.2H803V310.4H800.6ZM798.4 310.4H800.6V312H798.4ZM803 310.4H805.2V312H803Z" fill="#d0d0d0"/>
<path d="M811.8 312.8C813.6 312.4 814 310.4 815.2 309.2 816.8 308.2 818.6 309 819 310.4 818.8 312 817.2 313.2 815.2 313.4 813.8 313.6 812.6 313.4 811.8 312.8Z" fill="#6f6f6f"/>
<path d="M817.4 309.4 823.6 303.2" stroke="#7a7a7a" stroke-width="1.7" stroke-linecap="round"/>
<path d="M835.6 302V312.8M830.2 307.4H841" stroke="#5a5a5a" stroke-width="1.1"/>
<path d="M835.6 301.2 833.8 303.4H837.4ZM835.6 313.6 833.8 311.4H837.4ZM829.4 307.4 831.6 305.6V309.2ZM841.8 307.4 839.6 305.6V309.2Z" fill="#5a5a5a"/>
<path d="M850.2 307.4V306A2.8 2.8 0 0 1 855.8 306V307.4" fill="none" stroke="#7c7c7c" stroke-width="1.7"/>
<rect x="848.4" y="306.8" width="9.2" height="5.8" rx=".8" fill="#808080"/>
<rect x="851.8" y="308.6" width="2.4" height="2.4" fill="#b5b5b5"/>
<!-- eye -->
<path d="M761 335.6C763.4 331.6 769.6 331.2 772.4 335.2 770 339.4 763.6 339.8 761 335.6Z" fill="#f4f4f4" stroke="#222" stroke-width="1.1"/>
<path d="M761 334.6C763.6 330.6 769.8 330.6 772.4 334.4" fill="none" stroke="#222" stroke-width="1.6"/>
<circle cx="766.8" cy="335.4" r="2.7" fill="#1c1c1c"/>
<circle cx="766" cy="334.6" r=".8" fill="#bbb"/>
</svg>

<!-- document tab close + scroll button -->
<svg class="ic" style="left:225px;top:91.5px" width="11" height="11" viewBox="0 0 11 11"><rect x=".5" y=".5" width="10" height="10" fill="#d8d8d8" stroke="#8a8a8a"/><path d="M3 3 8 8M8 3 3 8" stroke="#444" stroke-width="1.4"/></svg>
<div class="a" style="left:704.5px;top:108px;width:13px;height:15px;background:#f5f5ec;border:1px solid #e9e9de;border-radius:2px"></div>
<svg class="ic" style="left:706.5px;top:111px" width="9" height="7" viewBox="0 0 9 7"><path d="M1 5.5 4.5 2 8 5.5" fill="none" stroke="#dcdcd0" stroke-width="1.8"/></svg>

<!--ICONS-->
</body>
</html>
